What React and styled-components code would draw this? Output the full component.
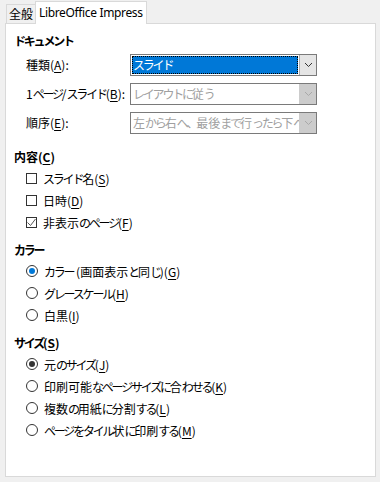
import React from 'react';
import styled, { createGlobalStyle } from 'styled-components';

const GlobalStyle = createGlobalStyle`
  html, body { margin: 0; padding: 0; background: #f0f0f0; }
  body {
    font-family: "Noto Sans CJK JP", sans-serif;
    font-size: 12px;
    color: #000;
  }
`;

const Page = styled.div`
  width: 380px;
  height: 482px;
  box-sizing: border-box;
  padding: 0 4px 5px 5px;
  display: flex;
  flex-direction: column;
`;

const TabBar = styled.div`
  display: flex;
  align-items: flex-end;
  height: 23px;
  padding-left: 1px;
  flex: none;
`;

const Tab = styled.div`
  position: relative;
  z-index: 1;
  box-sizing: border-box;
  height: ${p => (p.$active ? 23 : 19)}px;
  margin-bottom: ${p => (p.$active ? -1 : 0)}px;
  padding: 0 ${p => (p.$active ? 3 : 2)}px;
  border: 1px solid #d9d9d9;
  border-bottom: none;
  ${p => (p.$active ? '' : 'border-right: none;')}
  background: ${p => (p.$active ? '#fff' : '#f0f0f0')};
  display: flex;
  align-items: center;
  line-height: 1;
  white-space: nowrap;
`;

const LatinText = styled.span`
  font-family: "Noto Sans", sans-serif;
  letter-spacing: -0.35px;
`;

/* proportional kana, as in the Windows UI font */
const Kana = styled.span`
  letter-spacing: -2.2px;
`;

const k = str =>
  str.split(/([\u3001\u3040-\u30ff]+)/).map((part, i) =>
    /^[\u3001\u3040-\u30ff]+$/.test(part) ? <Kana key={i}>{part}</Kana> : part
  );

const Panel = styled.div`
  flex: 1;
  border: 1px solid #d9d9d9;
  background: #fff;
  padding: 7px 8px 0 8px;
  display: flex;
  flex-direction: column;
`;

const Section = styled.div`
  margin-top: ${p => p.$top || 0}px;
  display: flex;
  flex-direction: column;
`;

const Heading = styled.div`
  height: 20px;
  line-height: 20px;
  font-weight: bold;
`;

const Mn = styled.span`
  text-decoration: underline;
  text-underline-offset: 2px;
  text-decoration-thickness: 1px;
`;

const ComboGrid = styled.div`
  display: grid;
  grid-template-columns: 104px 187px;
  row-gap: 7px;
  margin-top: 3px;
  padding-left: 12px;
`;

const ComboLabel = styled.div`
  height: 22px;
  line-height: 22px;
  white-space: nowrap;
`;

const Combo = styled.div`
  height: 22px;
  box-sizing: border-box;
  border: 1px solid #7a7a7a;
  background: #fff;
  display: flex;
`;

const ComboValue = styled.div`
  flex: 1;
  min-width: 0;
  overflow: hidden;
  white-space: nowrap;
  box-sizing: border-box;
  line-height: 18px;
  padding-left: ${p => (p.$selected ? 1 : 2)}px;
  margin: ${p => (p.$selected ? '1px 1px 1px 1px' : '1px 0 1px 0')};
  background: ${p => (p.$selected ? '#0078d7' : 'transparent')};
  color: ${p => (p.$selected ? '#fff' : p.$disabled ? '#a0a0a0' : '#000')};
  outline: ${p => (p.$selected ? '1px dotted #000' : 'none')};
  outline-offset: -1px;
`;

const DropButton = styled.div`
  width: 17px;
  flex: none;
  box-sizing: border-box;
  background: ${p => (p.$disabled ? '#cccccc' : '#e5e5e5')};
  border-left: 1px solid ${p => (p.$disabled ? '#cccccc' : '#adadad')};
  display: flex;
  align-items: center;
  justify-content: center;
`;

const OptionList = styled.div`
  display: flex;
  flex-direction: column;
  padding-left: 12px;
`;

const OptionRow = styled.div`
  height: 22px;
  display: flex;
  align-items: center;
  gap: 6px;
  white-space: nowrap;
`;

const CheckBox = styled.div`
  width: 11px;
  height: 11px;
  box-sizing: border-box;
  border: 1px solid #333;
  background: #fff;
  flex: none;
  display: flex;
  align-items: center;
  justify-content: center;
`;

const Radio = styled.div`
  width: 12px;
  height: 12px;
  box-sizing: border-box;
  border: 1px solid #333;
  border-radius: 50%;
  background: #fff;
  flex: none;
  display: flex;
  align-items: center;
  justify-content: center;
`;

const RadioDot = styled.div`
  width: 6px;
  height: 6px;
  border-radius: 50%;
  background: ${p => p.$color};
`;

const Chevron = ({ color }) => (
  <svg width="9" height="6" viewBox="0 0 9 6">
    <polyline points="1,1 4.5,4.5 8,1" fill="none" stroke={color} strokeWidth="1" />
  </svg>
);

const Check = () => (
  <svg width="9" height="9" viewBox="0 0 9 9">
    <polyline points="0.5,4.5 3.5,7.5 8.5,1" fill="none" stroke="#555" strokeWidth="1" />
  </svg>
);

const ComboBox = ({ value, selected, disabled }) => (
  <Combo>
    <ComboValue $selected={selected} $disabled={disabled}>{k(value)}</ComboValue>
    <DropButton $disabled={disabled}>
      <Chevron color={disabled ? '#a8a8a8' : '#333'} />
    </DropButton>
  </Combo>
);

const CheckOption = ({ checked, label, mn }) => (
  <OptionRow>
    <CheckBox>{checked && <Check />}</CheckBox>
    <span>{k(label)}(<Mn>{mn}</Mn>)</span>
  </OptionRow>
);

const RadioOption = ({ checked, color = '#333', label, mn }) => (
  <OptionRow>
    <Radio>{checked && <RadioDot $color={color} />}</Radio>
    <span>{k(label)}(<Mn>{mn}</Mn>)</span>
  </OptionRow>
);

export default function App() {
  return (
    <>
      <GlobalStyle />
      <Page>
        <TabBar>
          <Tab>全般</Tab>
          <Tab $active><LatinText>LibreOffice Impress</LatinText></Tab>
        </TabBar>
        <Panel>
          <Section>
            <Heading>{k('ドキュメント')}</Heading>
            <ComboGrid>
              <ComboLabel>種類(<Mn>A</Mn>):</ComboLabel>
              <ComboBox value="スライド" selected />
              <ComboLabel>1{k('ページ')}/{k('スライド')}(<Mn>B</Mn>):</ComboLabel>
              <ComboBox value="レイアウトに従う" disabled />
              <ComboLabel>順序(<Mn>E</Mn>):</ComboLabel>
              <ComboBox value="左から右へ、最後まで行ったら下へ" disabled />
            </ComboGrid>
          </Section>
          <Section $top={13}>
            <Heading>内容(<Mn>C</Mn>)</Heading>
            <OptionList>
              <CheckOption label="スライド名" mn="S" />
              <CheckOption label="日時" mn="D" />
              <CheckOption checked label="非表示のページ" mn="F" />
            </OptionList>
          </Section>
          <Section $top={7}>
            <Heading>{k('カラー')}</Heading>
            <OptionList>
              <RadioOption checked color="#0078d7" label="カラー (画面表示と同じ)" mn="G" />
              <RadioOption label="グレースケール" mn="H" />
              <RadioOption label="白黒" mn="I" />
            </OptionList>
          </Section>
          <Section $top={7}>
            <Heading>{k('サイズ')}(<Mn>S</Mn>)</Heading>
            <OptionList>
              <RadioOption checked label="元のサイズ" mn="J" />
              <RadioOption label="印刷可能なページサイズに合わせる" mn="K" />
              <RadioOption label="複数の用紙に分割する" mn="L" />
              <RadioOption label="ページをタイル状に印刷する" mn="M" />
            </OptionList>
          </Section>
        </Panel>
      </Page>
    </>
  );
}
